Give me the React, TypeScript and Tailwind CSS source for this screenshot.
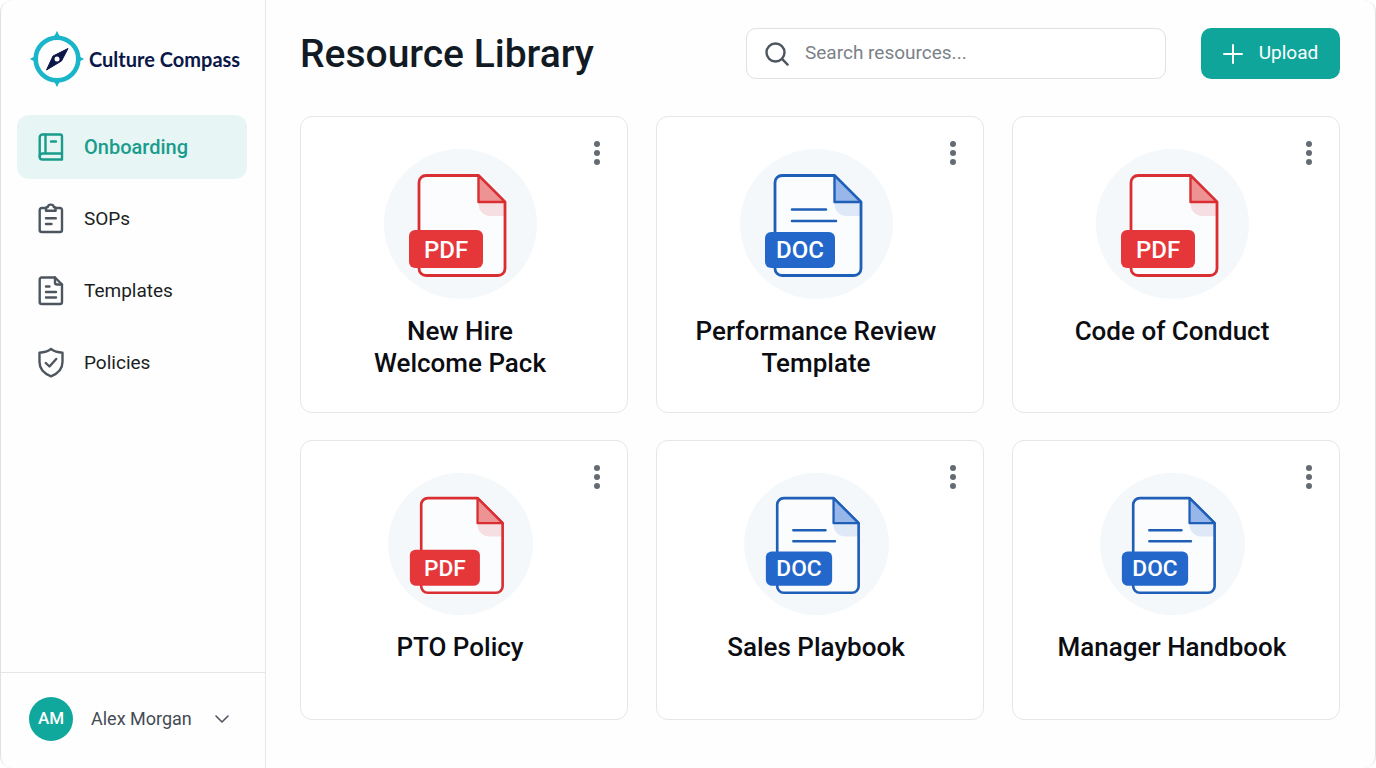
import { useState } from "react";

type FileType = "PDF" | "DOC";

const resources: { title: string; type: FileType }[] = [
  { title: "New Hire\nWelcome Pack", type: "PDF" },
  { title: "Performance Review\nTemplate", type: "DOC" },
  { title: "Code of Conduct", type: "PDF" },
  { title: "PTO Policy", type: "PDF" },
  { title: "Sales Playbook", type: "DOC" },
  { title: "Manager Handbook", type: "DOC" },
];

const iconProps = {
  width: 28,
  height: 32,
  viewBox: "0 0 28 32",
  fill: "none",
  stroke: "currentColor",
  strokeWidth: 2.4,
  strokeLinecap: "round" as const,
  strokeLinejoin: "round" as const,
  "aria-hidden": true,
};

function BookIcon() {
  return (
    <svg {...iconProps}>
      <path d="M5.5 3.5H23a2 2 0 0 1 2 2V28.500H5.500A2.800 2.800 0 0 1 2.700 25.700V6.300A2.800 2.800 0 0 1 5.500 3.500Z" />
      <path d="M8.500 3.500V22.500M2.700 25.500A3 3 0 0 1 5.700 22.500H25M14 10.500H19" />
    </svg>
  );
}

function ClipboardIcon() {
  return (
    <svg {...iconProps}>
      <path d="M9 5H4.700a2 2 0 0 0-2 2V27a2 2 0 0 0 2 2H23a2 2 0 0 0 2-2V7a2 2 0 0 0-2-2H18.500" />
      <path d="M9 5.500C9 4.500 9.700 4 10.800 4C11 2.600 12.200 1.600 13.800 1.600S16.600 2.600 16.800 4C17.900 4 18.600 4.500 18.600 5.500V7.800H9Z" />
      <path d="M9 15.300H18.800M9 21H14.500" />
    </svg>
  );
}

function DocumentIcon() {
  return (
    <svg {...iconProps}>
      <path d="M18 2.500H4.700a2 2 0 0 0-2 2V27a2 2 0 0 0 2 2H23a2 2 0 0 0 2-2V9.500Z" />
      <path d="M18 2.500V7.500a2 2 0 0 0 2 2H25M9 11.500H12.500M9 17H19M9 22.500H19" />
    </svg>
  );
}

function ShieldIcon() {
  return (
    <svg {...iconProps}>
      <path d="M14 2C17 4.300 21 5.500 25.500 5.700V15C25.500 22 21 26.500 14 29.300C7 26.500 2.500 22 2.500 15V5.700C7 5.500 11 4.300 14 2Z" />
      <path d="M8.800 16L12.500 19.500L19.200 12" />
    </svg>
  );
}

const navItems = [
  { label: "Onboarding", icon: BookIcon },
  { label: "SOPs", icon: ClipboardIcon },
  { label: "Templates", icon: DocumentIcon },
  { label: "Policies", icon: ShieldIcon },
];

function CompassLogo() {
  return (
    <svg className="w-14 h-14 shrink-0" viewBox="0 0 56 56" aria-hidden="true">
      <path
        fill="#1ab5c9"
        d="M28 0C29 1 29 3.500 32 6H24C27 3.500 27 1 28 0ZM28 56C29 55 29 52.500 32 50H24C27 52.500 27 55 28 56ZM1 28C2 29 4.500 29 6.500 32V24C4.500 27 2 27 1 28ZM55 28C54 29 51.500 29 49.500 32V24C51.500 27 54 27 55 28Z"
      />
      <circle cx="28" cy="28" r="21.300" fill="none" stroke="#1ab5c9" strokeWidth="4.600" />
      <path
        fill="#0a1747"
        stroke="#0a1747"
        strokeLinejoin="round"
        d="M39 17.500L32.500 30L17.500 39L24 25Z"
      />
      <circle cx="28" cy="28" r="2.500" fill="#fff" />
    </svg>
  );
}

function FileIllustration({ type, small }: { type: FileType; small: boolean }) {
  const isPdf = type === "PDF";
  const color = isPdf ? "#d92f33" : "#1f5fb8";
  const badge = isPdf ? "#e5373a" : "#2467cb";
  const fold = isPdf ? "#ee9393" : "#97b7ea";
  const shade = isPdf ? "#f6dfe2" : "#dfe8f6";
  const badgeX = small ? 23 : 25;
  const badgeWidth = isPdf ? 74 : 70;

  return (
    <svg
      className={small ? "w-[145px] h-[142px]" : "w-[153px] h-[150px]"}
      viewBox="0 0 153 150"
      role="img"
      aria-label={`${type} file`}
    >
      <ellipse cx="76.500" cy="75" rx="76.500" ry="75" fill="#f4f8fa" />
      <path
        d="M94.500 26.500H42a7 7 0 0 0-7 7V119.500a7 7 0 0 0 7 7H114a7 7 0 0 0 7-7V53Z"
        fill="#fafcfd"
      />
      <path d="M94.500 53V55a12 12 0 0 0 12 12H121V53Z" fill={shade} />
      <path
        d="M94.500 26.500H42a7 7 0 0 0-7 7V119.500a7 7 0 0 0 7 7H114a7 7 0 0 0 7-7V53Z"
        fill="none"
        stroke={color}
        strokeWidth="2.800"
        strokeLinejoin="round"
      />
      <path
        d="M94.500 26.500V53H121Z"
        fill={fold}
        stroke={color}
        strokeWidth="2.400"
        strokeLinejoin="round"
      />
      {!isPdf && (
        <path
          d="M52 60.500H86M52 72H96"
          stroke={color}
          strokeWidth="2.600"
          strokeLinecap="round"
        />
      )}
      <rect
        x={badgeX}
        y={isPdf ? 81 : 83}
        width={badgeWidth}
        height={isPdf ? 38 : 36}
        rx="6"
        fill={badge}
      />
      <text
        x={badgeX + badgeWidth / 2}
        y={109}
        textAnchor="middle"
        fill="#fff"
        fontFamily="Roboto, sans-serif"
        fontSize="24"
        fontWeight="500"
      >
        {type}
      </text>
    </svg>
  );
}

function ResourceCard({
  title,
  type,
  small,
}: {
  title: string;
  type: FileType;
  small: boolean;
}) {
  return (
    <article className="relative min-h-[280px] flex flex-col items-center bg-white border border-[#e4e6e8] rounded-xl pt-8 pb-[33px] pl-6 pr-8">
      <button
        type="button"
        aria-label={`Options for ${title}`}
        className="absolute top-5 right-4 w-7 h-8 flex flex-col items-center justify-center gap-[3px] text-[#646b72]"
      >
        <span className="w-1.5 h-1.5 rounded-full bg-current" />
        <span className="w-1.5 h-1.5 rounded-full bg-current" />
        <span className="w-1.5 h-1.5 rounded-full bg-current" />
      </button>

      <FileIllustration type={type} small={small} />

      <h2 className="mt-4 whitespace-pre-line text-center text-[26px] leading-8 font-medium text-[#0b0d12]">
        {title}
      </h2>
    </article>
  );
}

export default function App() {
  const [active, setActive] = useState("Onboarding");
  const [search, setSearch] = useState("");

  const visible = resources.filter((item) =>
    item.title.replace("\n", " ").toLowerCase().includes(search.toLowerCase())
  );

  return (
    <div className="min-h-screen flex bg-[#fefefe] border-x border-[#dfe1e3] rounded-xl font-[Roboto,sans-serif]">
      {/* SIDEBAR */}
      <aside className="w-[265px] shrink-0 flex flex-col border-r border-[#e4e6e8]">
        <a href="#" className="flex items-center gap-1 pl-7 pt-[31px]">
          <CompassLogo />
          <span className="whitespace-nowrap text-[20px] font-bold text-[#0a1747] font-[Lato,sans-serif]">
            Culture Compass
          </span>
        </a>

        <nav className="flex flex-col gap-2 pl-4 pt-7 pr-[18px]">
          {navItems.map(({ label, icon: Icon }) => (
            <a
              key={label}
              href="#"
              onClick={() => setActive(label)}
              className={
                active === label
                  ? "h-16 flex items-center gap-[19px] pl-5 rounded-xl text-[20px] font-medium bg-[#e7f6f5] text-[#1a9c8c]"
                  : "h-16 flex items-center gap-[19px] pl-5 rounded-xl text-[19px] text-[#1b1f24]"
              }
            >
              <span className={active === label ? "text-[#1a9c8c]" : "text-[#4d565f]"}>
                <Icon />
              </span>
              {label}
            </a>
          ))}
        </nav>

        {/* USER */}
        <button
          type="button"
          className="mt-auto h-24 flex items-center pl-7 pb-1 border-t border-[#e4e6e8] text-left"
        >
          <span className="w-11 h-11 flex items-center justify-center rounded-full bg-[#10a79d] text-white text-[17px] font-medium">
            AM
          </span>
          <span className="ml-[18px] text-[18px] text-[#434b54]">Alex Morgan</span>
          <svg
            className="ml-[22px] w-4 h-4"
            viewBox="0 0 16 16"
            fill="none"
            stroke="#4d565f"
            strokeWidth="1.600"
            strokeLinecap="round"
            strokeLinejoin="round"
            aria-hidden="true"
          >
            <path d="M2 5L8 11L14 5" />
          </svg>
        </button>
      </aside>

      {/* CONTENT */}
      <main className="flex-1 pt-7 pb-12 pl-[34px] pr-[35px]">
        <header className="flex items-center mb-[37px]">
          <h1 className="text-[39px] leading-[48px] font-medium text-[#121a24]">
            Resource Library
          </h1>

          <label className="ml-auto w-[420px] h-[51px] flex items-center gap-4 pl-[18px] pr-4 bg-white border border-[#dfe1e3] rounded-[10px]">
            <svg
              className="w-6 h-6 shrink-0"
              viewBox="0 0 24 24"
              fill="none"
              stroke="#4d565f"
              strokeWidth="2.400"
              strokeLinecap="round"
              aria-hidden="true"
            >
              <circle cx="10.500" cy="10.500" r="9" />
              <path d="M17.200 17.200L22.600 22.600" />
            </svg>
            <input
              type="text"
              aria-label="Search resources"
              placeholder="Search resources..."
              value={search}
              onChange={(e) => setSearch(e.target.value)}
              className="flex-1 min-w-0 bg-transparent outline-none text-[19px] text-[#1b1f24] placeholder:text-[#7b8187]"
            />
          </label>

          <button
            type="button"
            className="ml-[35px] w-[139px] h-[51px] flex items-center justify-center gap-4 rounded-[10px] bg-[#0fa59b] text-white text-[19px]"
          >
            <svg
              className="w-5 h-5"
              viewBox="0 0 20 20"
              stroke="currentColor"
              strokeWidth="2"
              strokeLinecap="round"
              aria-hidden="true"
            >
              <path d="M10 1V19M1 10H19" />
            </svg>
            Upload
          </button>
        </header>

        {/* CARDS */}
        <section className="grid grid-cols-3 gap-x-7 gap-y-[27px]">
          {visible.map((item, index) => (
            <ResourceCard
              key={item.title}
              title={item.title}
              type={item.type}
              small={index > 2}
            />
          ))}
        </section>
      </main>
    </div>
  );
}
